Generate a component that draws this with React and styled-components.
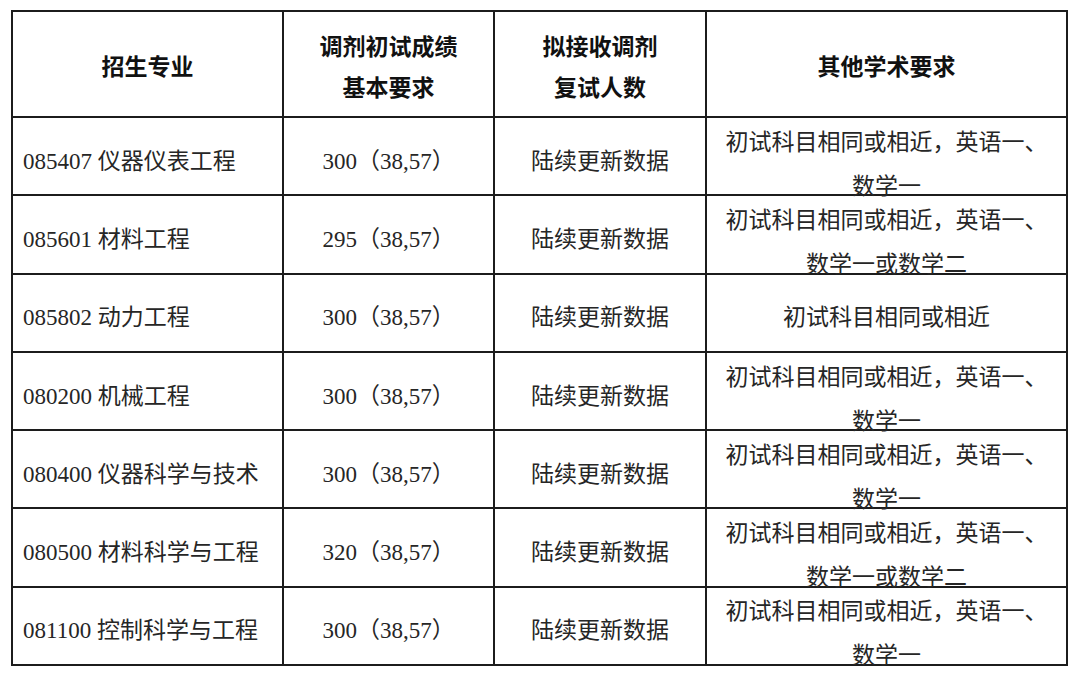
import React from 'react';
import styled, { createGlobalStyle } from 'styled-components';

const GlobalStyle = createGlobalStyle`
    html, body {
        margin: 0;
        padding: 0;
        background: #fff;
    }
    body {
        font-family: "Liberation Serif", "Noto Sans CJK SC", serif;
        color: #1a1a1a;
    }
`;

const LINE = '#1c1c1c';

const Page = styled.main`
    width: 1080px;
    height: 681px;
    padding: 10px 0 0 11px;
    box-sizing: border-box;
    overflow: hidden;
`;

const Grid = styled.section`
    display: grid;
    grid-template-columns: 271px 211px 212px 361px;
    grid-template-rows: 106px repeat(7, 78.3px);
    width: max-content;
    border-top: 2px solid ${LINE};
    border-left: 2px solid ${LINE};
`;

// header cells and body cells share one cell; $head, $left and $multi change it
const Cell = styled.div`
    display: flex;
    flex-direction: column;
    justify-content: center;
    align-items: ${({ $left }) => ($left ? 'flex-start' : 'center')};
    box-sizing: border-box;
    min-height: 0;
    padding-top: ${({ $head, $multi }) => ($head ? 7 : $multi ? 17 : 11)}px;
    padding-left: ${({ $left }) => ($left ? '10px' : '0')};
    border-right: 2px solid ${LINE};
    border-bottom: 2px solid ${LINE};
    font-size: 23px;
    line-height: ${({ $head }) => ($head ? '41px' : '44px')};
    font-weight: ${({ $head }) => ($head ? 700 : 400)};
    color: ${({ $head }) => ($head ? '#111' : '#262626')};
    text-align: center;
    white-space: nowrap;
`;

const Line = styled.span`
    display: block;
`;

const headers = [
    ['招生专业'],
    ['调剂初试成绩', '基本要求'],
    ['拟接收调剂', '复试人数'],
    ['其他学术要求'],
];

const rows = [
    ['085407 仪器仪表工程', '300（38,57）', ['初试科目相同或相近，英语一、', '数学一']],
    ['085601 材料工程', '295（38,57）', ['初试科目相同或相近，英语一、', '数学一或数学二']],
    ['085802 动力工程', '300（38,57）', ['初试科目相同或相近']],
    ['080200 机械工程', '300（38,57）', ['初试科目相同或相近，英语一、', '数学一']],
    ['080400 仪器科学与技术', '300（38,57）', ['初试科目相同或相近，英语一、', '数学一']],
    ['080500 材料科学与工程', '320（38,57）', ['初试科目相同或相近，英语一、', '数学一或数学二']],
    ['081100 控制科学与工程', '300（38,57）', ['初试科目相同或相近，英语一、', '数学一']],
];

export default function App() {
    return (
        <>
            <GlobalStyle />
            <Page>
                <Grid>
                    {headers.map((lines, i) => (
                        <Cell $head key={'h' + i}>
                            {lines.map((l) => (
                                <Line key={l}>{l}</Line>
                            ))}
                        </Cell>
                    ))}
                    {rows.map(([major, score, other]) => (
                        <React.Fragment key={major}>
                            <Cell $left>{major}</Cell>
                            <Cell>{score}</Cell>
                            <Cell>陆续更新数据</Cell>
                            <Cell $multi={other.length > 1}>
                                {other.map((l) => (
                                    <Line key={l}>{l}</Line>
                                ))}
                            </Cell>
                        </React.Fragment>
                    ))}
                </Grid>
            </Page>
        </>
    );
}
